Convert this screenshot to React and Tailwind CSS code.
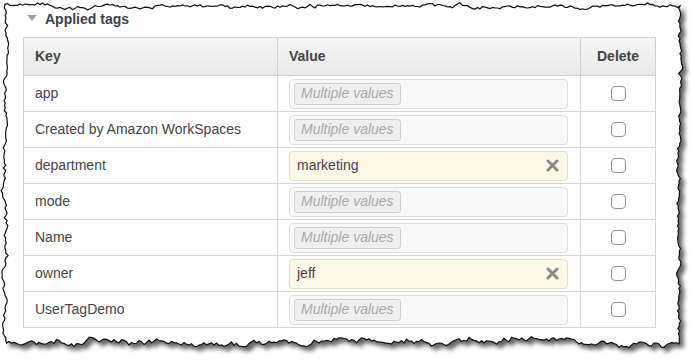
import React from 'react';

const rows = [
  { key: 'app' },
  { key: 'Created by Amazon WorkSpaces' },
  { key: 'department', value: 'marketing' },
  { key: 'mode' },
  { key: 'Name' },
  { key: 'owner', value: 'jeff' },
  { key: 'UserTagDemo' },
];

// deterministic wobble for the torn paper edge
function tornPath() {
  let seed = 11;
  const rnd = () => {
    seed = (seed * 16807) % 2147483647;
    return seed / 2147483647 - 0.5;
  };
  let drift = 0;
  const wob = (amp) => {
    drift = drift * 0.8 + rnd() * amp;
    return drift + rnd() * 1.5;
  };
  const pts = [];
  const L = 5, T = 6, R = 679, B = 343;
  for (let x = L; x < R; x += 2.5) pts.push([x, T + wob(3)]);
  for (let y = T; y < B; y += 2.5) pts.push([R + wob(3), y]);
  for (let x = R; x > L; x -= 2.5) pts.push([x, B + wob(5)]);
  for (let y = B; y > T; y -= 2.5) pts.push([L + wob(3), y]);
  return 'M' + pts.map((p) => p[0].toFixed(1) + ' ' + p[1].toFixed(1)).join(' L') + ' Z';
}

function TornFrame() {
  return (
    <svg className="absolute inset-0 pointer-events-none" width="692" height="364">
      <defs>
        <filter id="shade" x="-5%" y="-5%" width="115%" height="120%">
          <feDropShadow dx="4" dy="4" stdDeviation="2" floodColor="#000" floodOpacity="0.6" />
        </filter>
      </defs>
      <path d={tornPath()} fill="#fff" stroke="#111" strokeWidth="1.2" filter="url(#shade)" />
    </svg>
  );
}

function ValueInput({ value }) {
  if (value) {
    return (
      <div className="h-[30px] flex items-center justify-between rounded-[4px] border border-[#e3dcc2] bg-[#fdf9e7] pl-[7px] pr-[8px] text-[14px] text-[#444]">
        <span>{value}</span>
        <svg width="13" height="13" viewBox="0 0 13 13">
          <path d="M2 2 L11 11 M11 2 L2 11" stroke="#8a8a8a" strokeWidth="3" strokeLinecap="round" />
        </svg>
      </div>
    );
  }
  return (
    <div className="h-[30px] flex items-center rounded-[4px] border border-[#dcdcdc] bg-[#f9f9f9] pl-[4px]">
      <span className="h-[22px] flex items-center rounded-[3px] border border-[#cfcfcf] bg-[#efefef] px-[6px] text-[14px] italic text-[#a9a9a9]">
        Multiple values
      </span>
    </div>
  );
}

export default function App() {
  return (
    <div className="relative w-[692px] h-[364px] bg-white overflow-hidden font-['Liberation_Sans',Arial,sans-serif]">
      <TornFrame />
      <div className="relative pl-[23px] pt-[9px]">
        <div className="flex items-center h-[20px] pl-[4px]">
          <svg width="10" height="7" viewBox="0 0 10 7" className="mr-[8px] mt-[-2px]">
            <path d="M0 0 L10 0 L5 6 Z" fill="#a0a0a0" />
          </svg>
          <span className="text-[14px] font-bold text-[#3a414b]">Applied tags</span>
        </div>
        <table className="mt-[8px] w-[633px] border-collapse text-[14px] text-[#444]">
          <thead>
            <tr className="h-[38px] bg-gradient-to-b from-[#f6f6f6] to-[#e8e8e8] font-bold">
              <th className="w-[254px] border border-[#cfcfcf] pl-[11px] text-left">Key</th>
              <th className="w-[303px] border border-[#cfcfcf] pl-[11px] text-left">Value</th>
              <th className="border border-[#cfcfcf] text-center">Delete</th>
            </tr>
          </thead>
          <tbody>
            {rows.map((r) => (
              <tr key={r.key} className="h-[36px]">
                <td className="border-y border-l border-[#d4d4d4] pl-[11px]">{r.key}</td>
                <td className="border-y border-l border-[#d4d4d4] pl-[11px] pr-[12px]">
                  <ValueInput value={r.value} />
                </td>
                <td className="border border-[#d4d4d4]">
                  <div className="mx-auto w-[15px] h-[15px] rounded-[4px] border border-[#8f8f8f] bg-white" />
                </td>
              </tr>
            ))}
          </tbody>
        </table>
      </div>
    </div>
  );
}
